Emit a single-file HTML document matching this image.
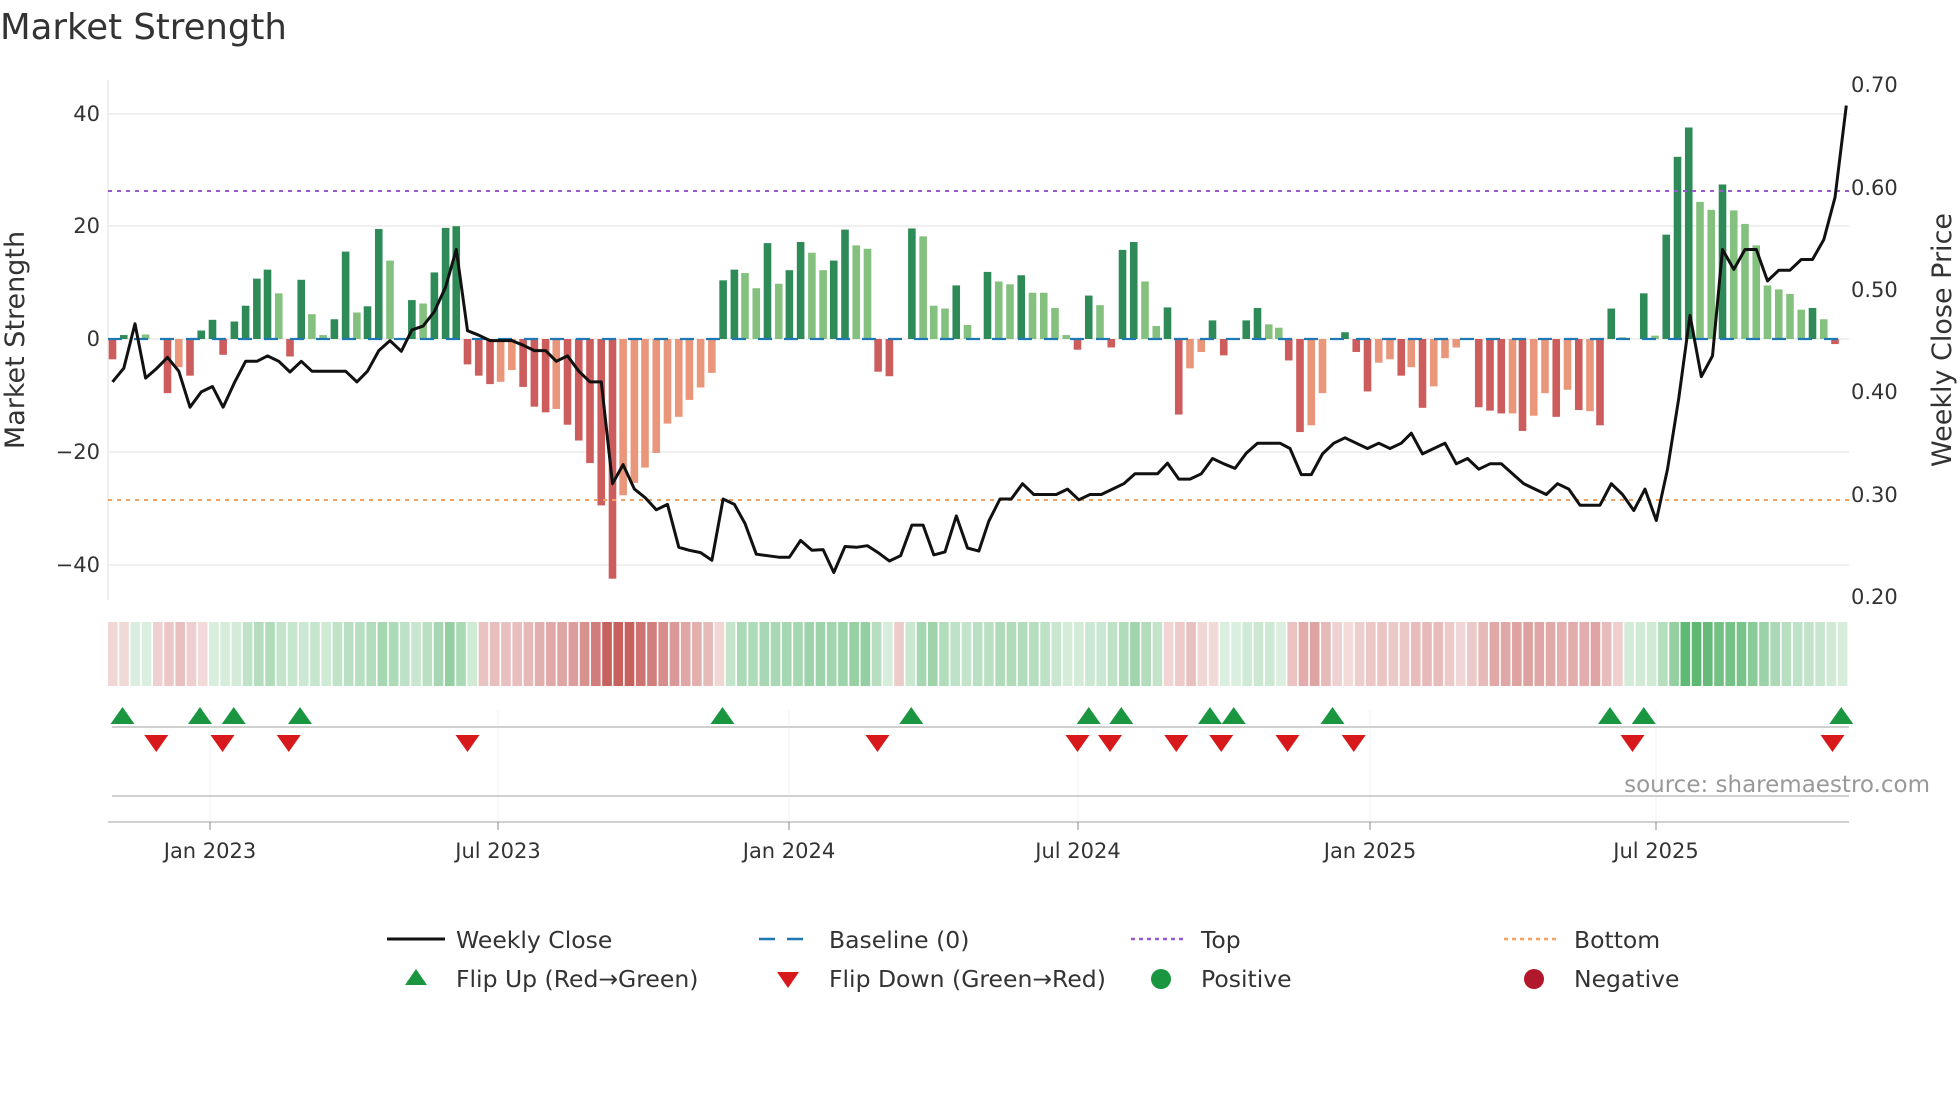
<!DOCTYPE html>
<html><head><meta charset="utf-8"><style>
html,body{margin:0;padding:0;background:#fff;}
svg{display:block;font-family:"DejaVu Sans","Liberation Sans",sans-serif;}
</style></head><body>
<svg id="s" width="1960" height="1102" viewBox="0 0 1960 1102" xmlns="http://www.w3.org/2000/svg">
<rect width="1960" height="1102" fill="#fff"/>
<text x="0" y="39" font-size="35.5" fill="#333">Market Strength</text>
<g stroke="#ececec" stroke-width="1.5">
<line x1="108" x2="1849" y1="114" y2="114"/><line x1="108" x2="1849" y1="226" y2="226"/>
<line x1="108" x2="1849" y1="339" y2="339"/><line x1="108" x2="1849" y1="452" y2="452"/>
<line x1="108" x2="1849" y1="565" y2="565"/>
<line x1="108" x2="108" y1="80" y2="600"/>
</g>
<g stroke="#eef0f3" stroke-width="1">
<line x1="210" x2="210" y1="710" y2="822"/><line x1="498" x2="498" y1="710" y2="822"/>
<line x1="789" x2="789" y1="710" y2="822"/><line x1="1078" x2="1078" y1="710" y2="822"/>
<line x1="1370" x2="1370" y1="710" y2="822"/><line x1="1656" x2="1656" y1="710" y2="822"/>
</g>
<g font-size="21" fill="#333" text-anchor="end">
<text x="100" y="121">40</text><text x="100" y="233">20</text><text x="100" y="346">0</text>
<text x="100" y="459">−20</text><text x="100" y="572">−40</text>
</g>
<g font-size="21" fill="#333">
<text x="1851" y="92">0.70</text><text x="1851" y="195">0.60</text><text x="1851" y="297">0.50</text>
<text x="1851" y="399">0.40</text><text x="1851" y="502">0.30</text><text x="1851" y="604">0.20</text>
</g>
<text transform="translate(24,340) rotate(-90)" font-size="27" fill="#333" text-anchor="middle">Market Strength</text>
<text transform="translate(1951,340) rotate(-90)" font-size="27" fill="#333" text-anchor="middle">Weekly Close Price</text>
<g id="bars"></g>
<line x1="108" x2="1849" y1="339" y2="339" stroke="#1f77b4" stroke-width="2.2" stroke-dasharray="14,12"/>
<line x1="108" x2="1849" y1="191" y2="191" stroke="#9b59d0" stroke-width="2" stroke-dasharray="4,5"/>
<line x1="108" x2="1849" y1="500" y2="500" stroke="#f0a060" stroke-width="2" stroke-dasharray="4,5"/>
<polyline id="price" fill="none" stroke="#111" stroke-width="3" stroke-linejoin="round"/>
<g id="heat"></g>
<line x1="112" x2="1849" y1="727" y2="727" stroke="#d0d0d0" stroke-width="2"/>
<line x1="112" x2="1849" y1="796" y2="796" stroke="#d0d0d0" stroke-width="2"/>
<line x1="108" x2="1849" y1="822" y2="822" stroke="#d0d0d0" stroke-width="2"/>
<g id="marks"></g>
<g stroke="#888" stroke-width="1"><line x1="210" x2="210" y1="822" y2="830"/><line x1="498" x2="498" y1="822" y2="830"/><line x1="789" x2="789" y1="822" y2="830"/><line x1="1078" x2="1078" y1="822" y2="830"/><line x1="1370" x2="1370" y1="822" y2="830"/><line x1="1656" x2="1656" y1="822" y2="830"/></g>
<g font-size="21" fill="#333" text-anchor="middle">
<text x="210" y="858">Jan 2023</text><text x="498" y="858">Jul 2023</text><text x="789" y="858">Jan 2024</text>
<text x="1078" y="858">Jul 2024</text><text x="1370" y="858">Jan 2025</text><text x="1656" y="858">Jul 2025</text>
</g>
<text x="1930" y="792" font-size="23" fill="#999" text-anchor="end">source: sharemaestro.com</text>
<g font-size="23.5" fill="#333">
<line x1="387" x2="445" y1="939" y2="939" stroke="#111" stroke-width="3"/>
<text x="456" y="948">Weekly Close</text>
<line x1="759" x2="812" y1="939" y2="939" stroke="#1f77b4" stroke-width="2.5" stroke-dasharray="16,12"/>
<text x="829" y="948">Baseline (0)</text>
<line x1="1131" x2="1187" y1="939" y2="939" stroke="#9b59d0" stroke-width="2.5" stroke-dasharray="4,4"/>
<text x="1201" y="948">Top</text>
<line x1="1504" x2="1560" y1="939" y2="939" stroke="#f0a060" stroke-width="2.5" stroke-dasharray="4,4"/>
<text x="1574" y="948">Bottom</text>
<polygon points="405,985 427,985 416,969" fill="#1a9641"/>
<text x="456" y="987">Flip Up (Red→Green)</text>
<polygon points="777,972 799,972 788,988" fill="#d7191c"/>
<text x="829" y="987">Flip Down (Green→Red)</text>
<circle cx="1161" cy="979" r="10" fill="#1a9641"/>
<text x="1201" y="987">Positive</text>
<circle cx="1534" cy="979" r="10" fill="#b2182b"/>
<text x="1574" y="987">Negative</text>
</g>
</svg>
<script>
var NS="http://www.w3.org/2000/svg";
function el(t,a,p){var e=document.createElementNS(NS,t);for(var k in a)e.setAttribute(k,a[k]);p.appendChild(e);return e;}
var b1=[[180,-3.6,1],[198,0.7,1],[216,0,1],[233,0.8,0],[251,0,1],[268,-9.6,1],[286,-5,0],[304,-6.5,1],[322,1.5,1],[340,3.4,1],[357,-2.8,1],[375,3.1,1],[393,5.9,1],[411,10.7,1],[428,12.3,1],[446,8.1,0],[464,-3.1,1],[482,10.5,1],[499,4.4,0],[517,0.7,0],[535,3.5,1],[553,15.5,1],[571,4.7,0],[588,5.8,1],[606,19.5,1],[624,13.9,0],[642,0,1],[659,6.9,1],[677,6.3,0],[695,11.8,1],[713,19.7,1],[730,20,1],[748,-4.5,1],[766,-6.5,1],[784,-8,1],[801,-7.6,0],[819,-5.5,0],[837,-8.5,1],[855,-12,1],[873,-13,1],[890,-12.4,0],[908,-15.2,1],[926,-18,1],[944,-22,1],[962,-29.5,1],[980,-42.5,1],[997,-27.7,0],[1015,-25.5,0],[1032,-22.8,0],[1050,-20.2,0],[1068,-15,0],[1086,-13.8,0],[1103,-10.8,0],[1121,-8.6,0],[1139,-6,0],[1157,10.4,1],[1175,12.3,1],[1192,11.7,0],[1210,9,0],[1228,17,1],[1246,9.8,0],[1263,12.2,1],[1281,17.2,1],[1299,15.3,0],[1317,12.2,0],[1334,13.9,1],[1352,19.4,1],[1370,16.6,0],[1388,16,0],[1405,-5.8,1],[1423,-6.6,1],[1441,0,1],[1459,19.6,1],[1477,18.2,0],[1494,5.9,0],[1512,5.4,0],[1530,9.5,1],[1548,2.5,0]];
var b2=[[12,11.9,1],[30,10.2,0],[48,9.7,0],[66,11.3,1],[84,8.2,0],[102,8.2,0],[120,5.5,0],[138,0.7,0],[156,-1.9,1],[174,7.7,1],[192,6,0],[210,-1.5,1],[228,15.8,1],[246,17.2,1],[264,10.2,0],[282,2.3,0],[300,5.6,1],[318,-13.4,1],[336,-5.2,0],[354,-2.3,0],[372,3.3,1],[390,-2.9,1],[408,0,1],[426,3.3,1],[444,5.5,1],[462,2.6,0],[478,2,0],[494,-3.8,1],[512,-16.5,1],[530,-15.3,0],[548,-9.6,0],[566,0,1],[584,1.2,1],[602,-2.3,1],[620,-9.3,1],[638,-4.2,0],[656,-3.6,0],[674,-6.5,1],[690,-5,0],[708,-12.2,1],[726,-8.4,0],[744,-3.4,0],[762,-1.5,0],[780,0,1],[798,-12.1,1],[816,-12.7,1],[834,-13.2,1],[852,-13.2,0],[868,-16.3,1],[886,-13.6,0],[904,-9.6,0],[922,-13.8,1],[940,-9,0],[958,-12.6,1],[976,-12.8,0],[992,-15.3,1],[1010,5.4,1],[1028,0.3,0],[1046,0,1],[1062,8.1,1],[1080,0.6,0],[1098,18.5,1],[1116,32.3,1],[1134,37.5,1],[1152,24.3,0],[1170,22.9,0],[1188,27.4,1],[1206,22.8,0],[1224,20.4,0],[1242,16.6,0],[1260,9.5,0],[1278,8.8,0],[1296,8,0],[1314,5.2,0],[1332,5.5,1],[1350,3.5,0],[1368,-0.9,1]];
var bars=[];b1.forEach(function(b){bars.push([b[0]/1.6,b[1],b[2]]);});b2.forEach(function(b){bars.push([980+b[0]/1.6,b[1],b[2]]);});
var g=document.getElementById("bars"),U=5.64;
bars.forEach(function(b){var v=b[1];if(Math.abs(v)<0.2)return;var h=Math.abs(v)*U,c;
if(v>0)c=b[2]?"#2e8b57":"#85c17e";else c=b[2]?"#cd5c5c":"#e9967a";
el("rect",{x:b[0]-3.8,y:v>0?339-h:339,width:7.6,height:h,fill:c},g);});
var hg=document.getElementById("heat"),n=bars.length,W=(1849-108)/n;
for(var i=0;i<n;i++){var s=0,m=0;for(var j=i-1;j<=i+1;j++)if(bars[j]){s+=bars[j][1];m++;}var v=s/m;
var a=Math.min(1,0.22+Math.abs(v)/30*0.78),c=v>=0?"#4caf63":"#c0504d",x=108+i*W;
el("rect",{x:x,y:622,width:W-1.6,height:64,fill:c,"fill-opacity":a*0.9},hg);}
var p1=[[180,998],[198,962],[216,846],[233,988],[251,962],[268,934],[286,970],[304,1064],[322,1024],[340,1010],[357,1064],[375,1000],[393,944],[411,944],[428,930],[446,944],[464,972],[482,944],[499,970],[517,970],[535,970],[553,970],[571,998],[588,970],[606,916],[624,890],[642,918],[659,862],[677,852],[695,814],[713,750],[730,652],[748,864],[766,876],[784,890],[801,890],[819,890],[837,902],[855,916],[873,916],[890,944],[908,930],[926,970],[944,998],[962,998],[980,1264],[997,1214],[1015,1278],[1032,1300],[1050,1332],[1068,1318],[1086,1430],[1103,1438],[1121,1444],[1139,1464],[1157,1304],[1175,1318],[1192,1368],[1210,1448],[1228,1452],[1246,1456],[1263,1456],[1281,1412],[1299,1438],[1317,1436],[1334,1496],[1352,1428],[1370,1430],[1388,1426],[1405,1444],[1423,1466],[1441,1452],[1459,1372],[1477,1372],[1494,1450],[1512,1442],[1530,1348],[1548,1432],[1566,1440]];
var p2=[[14,1362],[32,1304],[50,1304],[68,1264],[86,1292],[104,1292],[122,1292],[140,1278],[158,1306],[176,1292],[194,1292],[212,1278],[230,1264],[248,1238],[266,1238],[284,1238],[300,1210],[318,1252],[336,1252],[354,1238],[372,1198],[390,1212],[408,1224],[426,1184],[444,1158],[462,1158],[480,1158],[496,1172],[514,1240],[530,1240],[548,1186],[566,1158],[584,1144],[602,1158],[620,1172],[638,1158],[656,1172],[674,1158],[690,1132],[708,1186],[726,1172],[744,1158],[762,1212],[780,1198],[798,1226],[816,1212],[834,1212],[852,1238],[870,1264],[888,1278],[906,1292],[924,1264],[942,1278],[960,1320],[978,1320],[992,1320],[1010,1264],[1028,1292],[1046,1334],[1064,1278],[1082,1360],[1100,1226],[1118,1040],[1136,824],[1154,984],[1172,930],[1188,652],[1206,704],[1224,652],[1242,652],[1260,734],[1278,706],[1296,706],[1314,678],[1332,678],[1350,626],[1368,516],[1386,276]];
var pts=[];p1.forEach(function(p){pts.push((p[0]/1.6).toFixed(1)+","+(p[1]/2.613).toFixed(1));});
p2.forEach(function(p){pts.push((980+p[0]/1.6).toFixed(1)+","+(p[1]/2.613).toFixed(1));});
document.getElementById("price").setAttribute("points",pts.join(" "));
var mg=document.getElementById("marks");
[98,160,187,240,578,729,871,897,968,987,1066,1288,1315,1473].forEach(function(x){x*=1.25;el("polygon",{points:(x-12)+",724 "+(x+12)+",724 "+x+",707",fill:"#1a9641"},mg);});
[125,178,231,374,702,862,888,941,977,1030,1083,1306,1466].forEach(function(x){x*=1.25;el("polygon",{points:(x-12)+",735 "+(x+12)+",735 "+x+",752",fill:"#d7191c"},mg);});
</script>
</body></html>
